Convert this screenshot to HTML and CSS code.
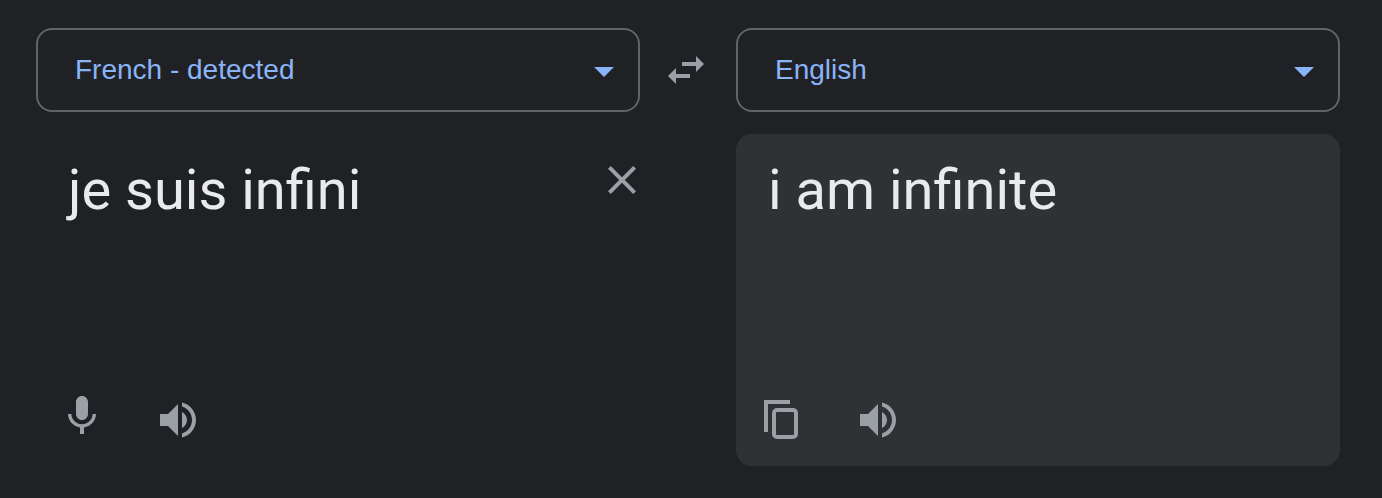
FILE: index.html
```html
<!DOCTYPE html>
<html>
<head>
<meta charset="utf-8" />
<title>Translate</title>
<link rel="stylesheet" href="styles.css">
</head>
<body>
<div class="translator">
    <div class="langselect">
        <span class="langname">French - detected</span>
        <span class="caret"></span>
    </div>
    <div class="swap">
        <svg width="36" height="28" viewBox="0 0 36 28"><path d="M14 6h14V0l8 8-8 8v-6H14zM22 18H8v-6l-8 8 8 8v-6h14z" /></svg>
    </div>
    <div class="langselect">
        <span class="langname">English</span>
        <span class="caret"></span>
    </div>

    <div class="pane">
        <div class="panetop">
            <div class="panetext">je suis infini</div>
            <svg class="close" width="28" height="28" viewBox="5 5 14 14"><path d="M19 6.41L17.59 5 12 10.59 6.41 5 5 6.41 10.59 12 5 17.59 6.41 19 12 13.41 17.59 19 19 17.59 13.41 12z" /></svg>
        </div>
        <div class="tools">
            <svg width="48" height="48" viewBox="0 2 24 24"><path d="M12 14c1.66 0 2.99-1.34 2.99-3L15 5c0-1.66-1.34-3-3-3S9 3.34 9 5v6c0 1.66 1.34 3 3 3zm5.3-3c0 3-2.54 5.1-5.3 5.1S6.7 14 6.7 11H5c0 3.41 2.72 6.23 6 6.72V21h2v-3.28c3.28-.48 6-3.3 6-6.72h-1.7z" /></svg>
            <svg width="48" height="48" viewBox="0 0 24 24"><path d="M3 9v6h4l5 5V4L7 9H3zm13.5 3c0-1.77-1.02-3.29-2.5-4.03v8.05c1.48-.73 2.5-2.25 2.5-4.02zM14 3.23v2.06c2.89.86 5 3.54 5 6.71s-2.11 5.85-5 6.71v2.06c4.01-.91 7-4.49 7-8.77s-2.99-7.86-7-8.77z" /></svg>
        </div>
    </div>
    <div></div>
    <div class="pane result">
        <div class="panetop">
            <div class="panetext">i am infinite</div>
        </div>
        <div class="tools">
            <svg width="48" height="48" viewBox="0 0 48 48"><path d="M6 4h26v4H10v28H6z" /><rect class="outline" x="16" y="14" width="22" height="27" rx="3" /></svg>
            <svg width="48" height="48" viewBox="0 0 24 24"><path d="M3 9v6h4l5 5V4L7 9H3zm13.5 3c0-1.77-1.02-3.29-2.5-4.03v8.05c1.48-.73 2.5-2.25 2.5-4.02zM14 3.23v2.06c2.89.86 5 3.54 5 6.71s-2.11 5.85-5 6.71v2.06c4.01-.91 7-4.49 7-8.77s-2.99-7.86-7-8.77z" /></svg>
        </div>
    </div>
</div>
</body>
</html>
```

FILE: styles.css
```css
body {
    margin:0;
    background:#202124;
    font-family:"Liberation Sans", Arial, sans-serif;
}
.translator {
    display:grid;
    grid-template-columns:604px 96px 604px;
    grid-template-rows:84px 332px;
    row-gap:22px;
    padding:28px 0 0 36px;
}
.langselect {
    display:flex;
    align-items:center;
    justify-content:space-between;
    border:2px solid #5f6368;
    border-radius:16px;
    padding:0 24px 0 37px;
    box-sizing:border-box;
}
.langname {
    font-size:28px;
    color:#8ab4f8;
}
.caret {
    width:0;
    height:0;
    margin-top:4px;
    border-left:10px solid transparent;
    border-right:10px solid transparent;
    border-top:10px solid #8ab4f8;
}
.swap {
    display:flex;
    justify-content:center;
    align-items:center;
    padding-right:4px;
}
svg {
    display:block;
    fill:#9aa0a6;
}
.outline {
    fill:none;
    stroke:#9aa0a6;
    stroke-width:4;
}
.pane {
    display:flex;
    flex-direction:column;
    justify-content:space-between;
    border-radius:16px;
    padding:0 0 22px 22px;
    box-sizing:border-box;
}
.result {
    background:#303134;
}
.panetop {
    display:flex;
    justify-content:space-between;
    align-items:flex-start;
}
.panetext {
    padding:24px 0 0 10px;
    font-family:Roboto, "Liberation Sans", sans-serif;
    font-size:56px;
    line-height:64px;
    color:#e8eaed;
}
.close {
    margin:32px 4px 0 0;
}
.tools {
    display:flex;
    gap:48px;
}
```
